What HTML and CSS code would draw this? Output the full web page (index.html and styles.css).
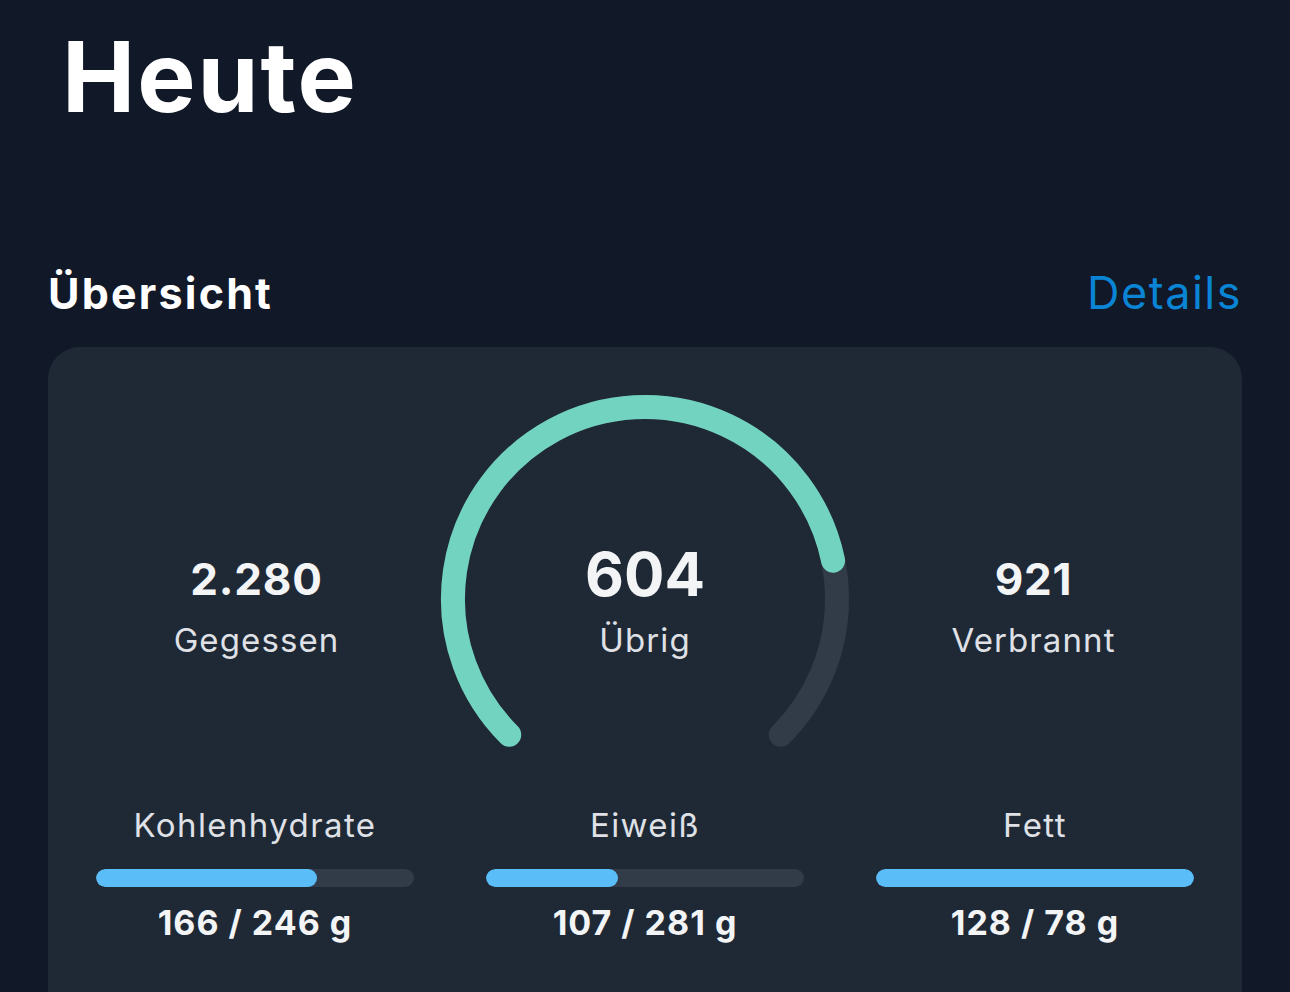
FILE: index.html
```html
<!DOCTYPE html>
<html lang="de">
<head>
    <meta charset="UTF-8">
    <meta name="viewport" content="width=device-width, initial-scale=1.0">
    <title>Heute</title>
    <link rel="stylesheet" href="styles.css">
</head>
<body>
    <div class="page">
        <h1 class="page-title">Heute</h1>

        <!-- Section header -->
        <div class="section-header">
            <h2>Übersicht</h2>
            <a href="#" class="details-link">Details</a>
        </div>

        <!-- Overview card -->
        <div class="card">
            <div class="calories">
                <div class="stat">
                    <div class="stat-value">2.280</div>
                    <div class="stat-label">Gegessen</div>
                </div>

                <div class="gauge">
                    <svg width="420" height="360" viewBox="0 0 420 360">
                        <path class="gauge-track" d="M 74.24 345.76 A 192 192 0 1 1 345.76 345.76"/>
                        <path class="gauge-fill" d="M 74.24 345.76 A 192 192 0 1 1 398.1 171.7"/>
                    </svg>
                    <div class="gauge-center">
                        <div class="gauge-value">604</div>
                        <div class="stat-label">Übrig</div>
                    </div>
                </div>

                <div class="stat">
                    <div class="stat-value">921</div>
                    <div class="stat-label">Verbrannt</div>
                </div>
            </div>

            <div class="macros">
                <div class="macro">
                    <div class="macro-label">Kohlenhydrate</div>
                    <div class="bar"><div class="bar-fill" style="width: 69.5%"></div></div>
                    <div class="macro-value">166 / 246 g</div>
                </div>
                <div class="macro">
                    <div class="macro-label">Eiweiß</div>
                    <div class="bar"><div class="bar-fill" style="width: 41.5%"></div></div>
                    <div class="macro-value">107 / 281 g</div>
                </div>
                <div class="macro">
                    <div class="macro-label">Fett</div>
                    <div class="bar"><div class="bar-fill" style="width: 100%"></div></div>
                    <div class="macro-value">128 / 78 g</div>
                </div>
            </div>
        </div>
    </div>
</body>
</html>
```

FILE: styles.css
```css
body {
    font-family: Inter, "Noto Sans", sans-serif;
    background-color: #111827;
    color: #fff;
    margin: 0;
    height: 992px;
    overflow: hidden;
}
.page {
    padding: 17px 48px 0;
}
.page-title {
    margin: 0 0 0 14px;
    font-size: 98px;
    line-height: 120px;
    font-weight: 700;
    letter-spacing: 2px;
}
.section-header {
    display: flex;
    justify-content: space-between;
    align-items: baseline;
    margin-top: 129px;
    margin-bottom: 27px;
}
.section-header h2 {
    margin: 0;
    font-size: 43px;
    line-height: 50px;
    font-weight: 700;
    letter-spacing: 2.2px;
}
.details-link {
    color: #0a84d4;
    font-size: 45px;
    line-height: 54px;
    letter-spacing: 1.5px;
    text-decoration: none;
}
.card {
    background-color: #1f2936;
    border-radius: 32px;
    padding: 42px 0 120px;
}
.calories {
    display: grid;
    grid-template-columns: 1fr 420px 1fr;
    padding: 0 30px;
}
.stat {
    padding-top: 163px;
    text-align: center;
}
.stat-value {
    font-size: 44px;
    line-height: 54px;
    font-weight: 700;
    color: #f3f4f6;
    letter-spacing: 0.8px;
    margin-bottom: 14px;
}
.stat-label {
    font-size: 33px;
    line-height: 40px;
    color: #dfe1e6;
    letter-spacing: 1.1px;
}
.gauge {
    position: relative;
    height: 360px;
}
.gauge svg {
    display: block;
}
.gauge-track,
.gauge-fill {
    fill: none;
    stroke-width: 24;
    stroke-linecap: round;
}
.gauge-track {
    stroke: #323c49;
}
.gauge-fill {
    stroke: #72d4c0;
}
.gauge-center {
    position: absolute;
    top: 149px;
    left: 0;
    right: 0;
    text-align: center;
}
.gauge-value {
    font-size: 60px;
    line-height: 72px;
    font-weight: 700;
    color: #f3f4f6;
    margin-bottom: 10px;
}
.macros {
    display: grid;
    grid-template-columns: repeat(3, 1fr);
    margin-top: 56px;
    padding: 0 12px;
}
.macro {
    padding: 0 36px;
    text-align: center;
}
.macro-label {
    font-size: 33px;
    line-height: 40px;
    color: #dfe1e6;
    letter-spacing: 1.4px;
}
.bar {
    height: 18px;
    margin-top: 24px;
    border-radius: 9px;
    background-color: #323c49;
    overflow: hidden;
}
.bar-fill {
    height: 100%;
    border-radius: 9px;
    background-color: #5abdf7;
}
.macro-value {
    margin-top: 15px;
    font-size: 34px;
    line-height: 42px;
    font-weight: 700;
    color: #f3f4f6;
    letter-spacing: 1px;
}
```
